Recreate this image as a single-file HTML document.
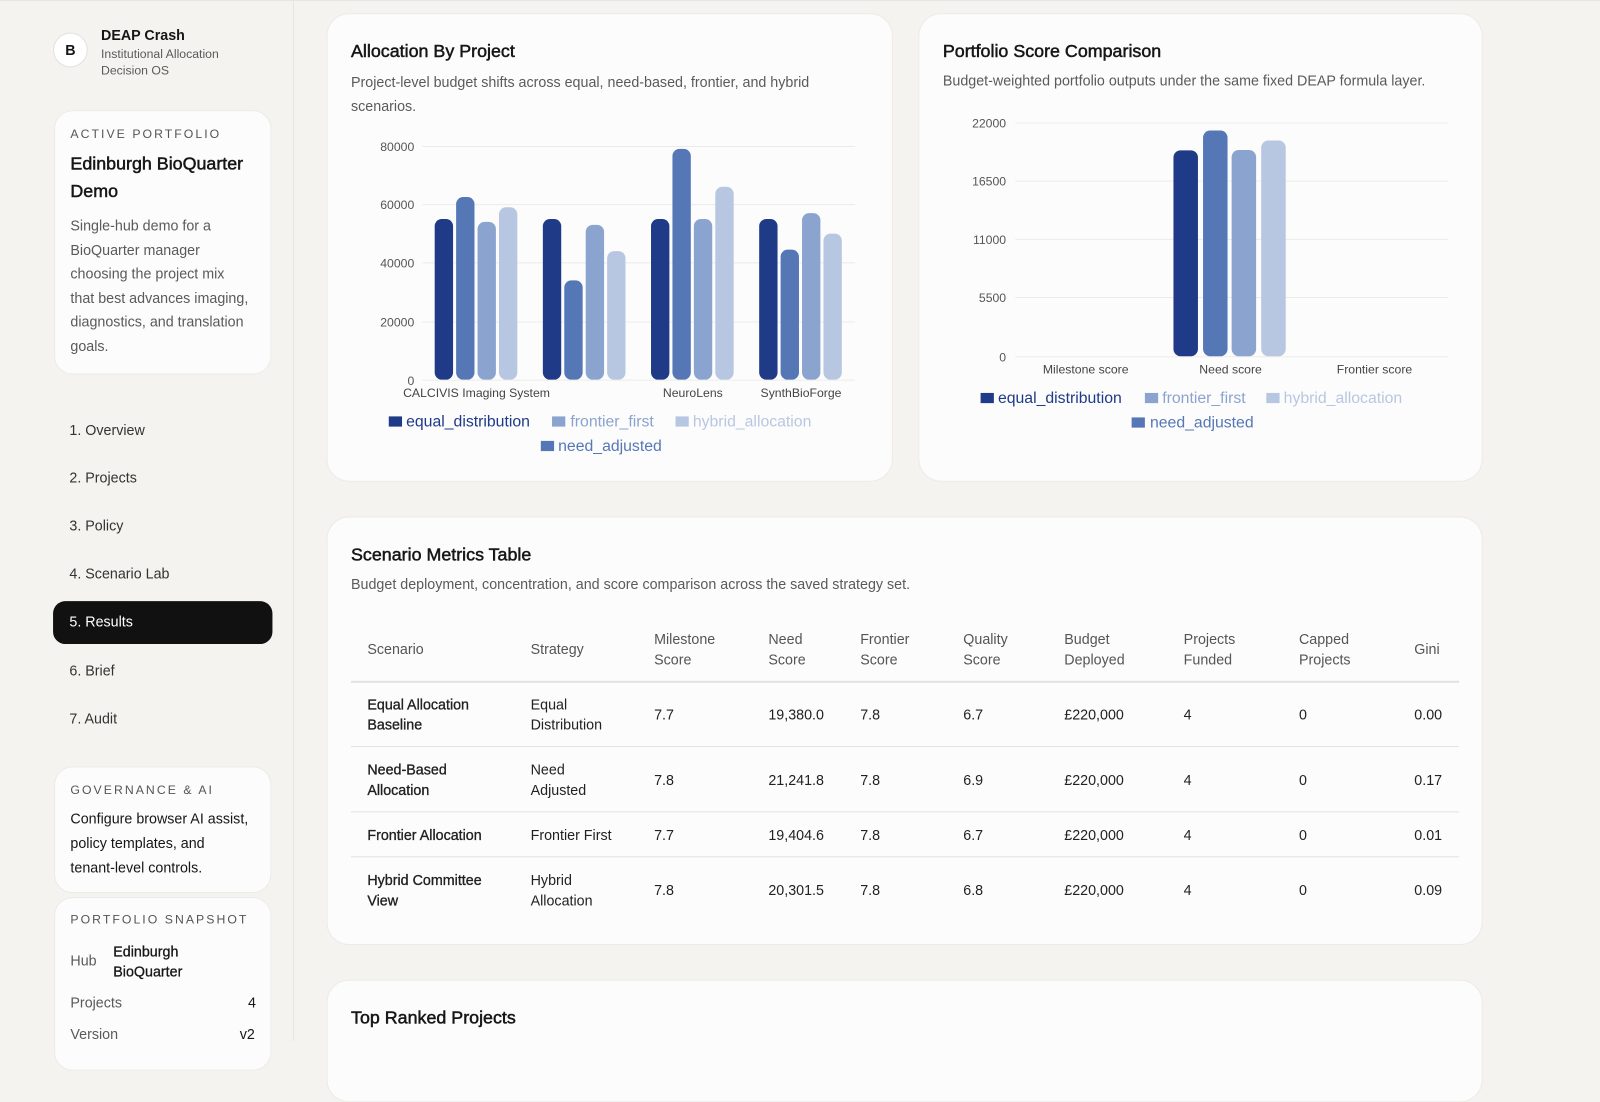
<!DOCTYPE html>
<html><head><meta charset="utf-8"><style>
*{box-sizing:border-box;margin:0;padding:0}
html,body{width:1600px;height:1041px;overflow:hidden;background:#f4f3ef;font-family:"Liberation Sans",sans-serif;color:#161616}
#wrap{position:absolute;left:0;top:0;width:1568px;height:1020px;transform:scale(1.0204,1.0206);transform-origin:0 0}
.a{position:absolute;white-space:nowrap}
.card{position:absolute;background:#fdfcfc;border:1px solid #ecebe7;border-radius:20px}
.lbl{font-size:12px;letter-spacing:2px;color:#555}
.g{color:#5a5a5a}
.t{-webkit-text-stroke:0.5px #161616}
.m{-webkit-text-stroke:0.3px #161616;color:#161616}
.nav{position:absolute;left:68px;font-size:14px;color:#333}
.th{position:absolute;font-size:14px;color:#555;line-height:20px}
.td{position:absolute;font-size:14px;line-height:20px;color:#222}
.hl{position:absolute;left:344px;width:1086px;height:1px;background:#e3e2de}
</style></head><body><div id="wrap">
<div class="a" style="left:0;top:0;width:1568px;height:1px;background:#e6e5e1"></div>
<div class="a" style="left:287px;top:0;width:1px;height:1020px;background:#e6e5e1"></div>

<!-- sidebar -->
<div class="a" style="left:52px;top:32px;width:34px;height:34px;border-radius:50%;background:#fff;border:1px solid #e2e1dd;text-align:center;line-height:32px;font-size:14px;font-weight:bold">B</div>
<div class="a" style="left:99px;top:26px;font-size:14px;font-weight:bold">DEAP Crash</div>
<div class="a g" style="left:99px;top:45px;font-size:12px;line-height:16px">Institutional Allocation<br>Decision OS</div>

<div class="card" style="left:53px;top:108px;width:213px;height:259px;border-radius:18px"></div>
<div class="a lbl" style="left:69px;top:124px">ACTIVE PORTFOLIO</div>
<div class="a t" style="left:69px;top:147px;font-size:17.5px;line-height:27px">Edinburgh BioQuarter<br>Demo</div>
<div class="a g" style="left:69px;top:210px;font-size:14px;line-height:23.6px">Single-hub demo for a<br>BioQuarter manager<br>choosing the project mix<br>that best advances imaging,<br>diagnostics, and translation<br>goals.</div>

<div class="nav" style="top:413px">1. Overview</div>
<div class="nav" style="top:460px">2. Projects</div>
<div class="nav" style="top:507px">3. Policy</div>
<div class="nav" style="top:554px">4. Scenario Lab</div>
<div class="a" style="left:52px;top:589px;width:215px;height:42px;background:#111;border-radius:12px"></div>
<div class="nav" style="top:601px;color:#fff">5. Results</div>
<div class="nav" style="top:649px">6. Brief</div>
<div class="nav" style="top:696px">7. Audit</div>

<div class="card" style="left:53px;top:751px;width:213px;height:124px;border-radius:18px"></div>
<div class="a lbl" style="left:69px;top:767px">GOVERNANCE &amp; AI</div>
<div class="a" style="left:69px;top:790px;font-size:14px;line-height:24px">Configure browser AI assist,<br>policy templates, and<br>tenant-level controls.</div>

<div class="card" style="left:53px;top:879px;width:213px;height:170px;border-radius:18px"></div>
<div class="a lbl" style="left:69px;top:894px">PORTFOLIO SNAPSHOT</div>
<div class="a g" style="left:69px;top:933px;font-size:14px">Hub</div>
<div class="a m" style="left:111px;top:922px;font-size:14px;line-height:20px">Edinburgh<br>BioQuarter</div>
<div class="a g" style="left:69px;top:974px;font-size:14px">Projects</div>
<div class="a" style="left:243px;top:974px;font-size:14px">4</div>
<div class="a g" style="left:69px;top:1005px;font-size:14px">Version</div>
<div class="a" style="left:235px;top:1005px;font-size:14px">v2</div>

<!-- cards -->
<div class="card" style="left:320px;top:13px;width:555px;height:459px;border-radius:22px"></div>
<div class="a t" style="left:344px;top:40px;font-size:17.5px">Allocation By Project</div>
<div class="a g" style="left:344px;top:69px;font-size:14px;line-height:23.5px">Project-level budget shifts across equal, need-based, frontier, and hybrid<br>scenarios.</div>

<div class="card" style="left:900px;top:13px;width:553px;height:459px;border-radius:22px"></div>
<div class="a t" style="left:924px;top:40px;font-size:17.5px">Portfolio Score Comparison</div>
<div class="a g" style="left:924px;top:71px;font-size:14px">Budget-weighted portfolio outputs under the same fixed DEAP formula layer.</div>

<svg class="a" style="left:0;top:0" width="1568" height="1020" font-family="Liberation Sans, sans-serif">
<g stroke="#ecebe8" stroke-width="1">
<line x1="414" x2="838" y1="143.5" y2="143.5"/><line x1="414" x2="838" y1="200.5" y2="200.5"/><line x1="414" x2="838" y1="257.5" y2="257.5"/><line x1="414" x2="838" y1="315.5" y2="315.5"/><line x1="414" x2="838" y1="372.5" y2="372.5"/>
<line x1="995" x2="1419" y1="120.5" y2="120.5"/><line x1="995" x2="1419" y1="177.5" y2="177.5"/><line x1="995" x2="1419" y1="234.5" y2="234.5"/><line x1="995" x2="1419" y1="291.5" y2="291.5"/><line x1="995" x2="1419" y1="349.5" y2="349.5"/>
</g>
<g font-size="12" fill="#555" text-anchor="end">
<text x="406" y="148">80000</text><text x="406" y="205">60000</text><text x="406" y="262">40000</text><text x="406" y="320">20000</text><text x="406" y="377">0</text>
<text x="986" y="125">22000</text><text x="986" y="182">16500</text><text x="986" y="239">11000</text><text x="986" y="296">5500</text><text x="986" y="354">0</text>
</g>
<g font-size="12" fill="#444" text-anchor="middle">
<text x="467" y="389">CALCIVIS Imaging System</text><text x="679" y="389">NeuroLens</text><text x="785" y="389">SynthBioForge</text>
<text x="1064" y="366">Milestone score</text><text x="1206" y="366">Need score</text><text x="1347" y="366">Frontier score</text>
</g>
<g>
<g fill="#1f3a87"><rect x="426" y="214.6" width="18" height="157.4" rx="7"/><rect x="532" y="214.6" width="18" height="157.4" rx="7"/><rect x="638" y="214.6" width="18" height="157.4" rx="7"/><rect x="744" y="214.6" width="18" height="157.4" rx="7"/></g>
<g fill="#5577b6"><rect x="447" y="193" width="18" height="179" rx="7"/><rect x="553" y="274.7" width="18" height="97.3" rx="7"/><rect x="659" y="145.9" width="18" height="226.1" rx="7"/><rect x="765" y="244.6" width="18" height="127.4" rx="7"/></g>
<g fill="#8aa4cf"><rect x="468" y="217.4" width="18" height="154.6" rx="7"/><rect x="574" y="220.3" width="18" height="151.7" rx="7"/><rect x="680" y="214.6" width="18" height="157.4" rx="7"/><rect x="786" y="208.8" width="18" height="163.2" rx="7"/></g>
<g fill="#b8c7e1"><rect x="489" y="203.1" width="18" height="168.9" rx="7"/><rect x="595" y="246" width="18" height="126" rx="7"/><rect x="701" y="183" width="18" height="189" rx="7"/><rect x="807" y="228.9" width="18" height="143.1" rx="7"/></g>
<rect x="1150" y="147.3" width="24" height="201.7" rx="7" fill="#1f3a87"/>
<rect x="1179" y="127.9" width="24" height="221.1" rx="7" fill="#5577b6"/>
<rect x="1207" y="147" width="24" height="202" rx="7" fill="#8aa4cf"/>
<rect x="1236" y="137.7" width="24" height="211.3" rx="7" fill="#b8c7e1"/>
</g>
<g font-size="15.5">
<rect x="381" y="408" width="13" height="10" fill="#1f3a87"/><text x="398" y="418" fill="#1f3a87">equal_distribution</text>
<rect x="541" y="408" width="13" height="10" fill="#8aa4cf"/><text x="559" y="418" fill="#8aa4cf">frontier_first</text>
<rect x="662" y="408" width="13" height="10" fill="#b8c7e1"/><text x="679" y="418" fill="#b8c7e1">hybrid_allocation</text>
<rect x="530" y="432" width="13" height="10" fill="#5577b6"/><text x="547" y="442" fill="#5577b6">need_adjusted</text>
<rect x="961" y="385" width="13" height="10" fill="#1f3a87"/><text x="978" y="395" fill="#1f3a87">equal_distribution</text>
<rect x="1122" y="385" width="13" height="10" fill="#8aa4cf"/><text x="1139" y="395" fill="#8aa4cf">frontier_first</text>
<rect x="1241" y="385" width="13" height="10" fill="#b8c7e1"/><text x="1258" y="395" fill="#b8c7e1">hybrid_allocation</text>
<rect x="1109" y="409" width="13" height="10" fill="#5577b6"/><text x="1127" y="419" fill="#5577b6">need_adjusted</text>
</g>
</svg>

<!-- table card -->
<div class="card" style="left:320px;top:506px;width:1133px;height:420px;border-radius:22px"></div>
<div class="a t" style="left:344px;top:533px;font-size:17.5px">Scenario Metrics Table</div>
<div class="a g" style="left:344px;top:564px;font-size:14px">Budget deployment, concentration, and score comparison across the saved strategy set.</div>

<div class="th" style="left:360px;top:626px">Scenario</div>
<div class="th" style="left:520px;top:626px">Strategy</div>
<div class="th" style="left:641px;top:616px">Milestone<br>Score</div>
<div class="th" style="left:753px;top:616px">Need<br>Score</div>
<div class="th" style="left:843px;top:616px">Frontier<br>Score</div>
<div class="th" style="left:944px;top:616px">Quality<br>Score</div>
<div class="th" style="left:1043px;top:616px">Budget<br>Deployed</div>
<div class="th" style="left:1160px;top:616px">Projects<br>Funded</div>
<div class="th" style="left:1273px;top:616px">Capped<br>Projects</div>
<div class="th" style="left:1386px;top:626px">Gini</div>
<div class="hl" style="top:667px;height:2px"></div>
<div class="hl" style="top:731px"></div>
<div class="hl" style="top:795px"></div>
<div class="hl" style="top:839px"></div>

<div class="td m" style="left:360px;top:680px">Equal Allocation<br>Baseline</div>
<div class="td g" style="left:520px;top:680px">Equal<br>Distribution</div>
<div class="td" style="left:641px;top:690px">7.7</div><div class="td" style="left:753px;top:690px">19,380.0</div><div class="td" style="left:843px;top:690px">7.8</div><div class="td" style="left:944px;top:690px">6.7</div><div class="td" style="left:1043px;top:690px">£220,000</div><div class="td" style="left:1160px;top:690px">4</div><div class="td" style="left:1273px;top:690px">0</div><div class="td" style="left:1386px;top:690px">0.00</div>

<div class="td m" style="left:360px;top:744px">Need-Based<br>Allocation</div>
<div class="td g" style="left:520px;top:744px">Need<br>Adjusted</div>
<div class="td" style="left:641px;top:754px">7.8</div><div class="td" style="left:753px;top:754px">21,241.8</div><div class="td" style="left:843px;top:754px">7.8</div><div class="td" style="left:944px;top:754px">6.9</div><div class="td" style="left:1043px;top:754px">£220,000</div><div class="td" style="left:1160px;top:754px">4</div><div class="td" style="left:1273px;top:754px">0</div><div class="td" style="left:1386px;top:754px">0.17</div>

<div class="td m" style="left:360px;top:808px">Frontier Allocation</div>
<div class="td g" style="left:520px;top:808px">Frontier First</div>
<div class="td" style="left:641px;top:808px">7.7</div><div class="td" style="left:753px;top:808px">19,404.6</div><div class="td" style="left:843px;top:808px">7.8</div><div class="td" style="left:944px;top:808px">6.7</div><div class="td" style="left:1043px;top:808px">£220,000</div><div class="td" style="left:1160px;top:808px">4</div><div class="td" style="left:1273px;top:808px">0</div><div class="td" style="left:1386px;top:808px">0.01</div>

<div class="td m" style="left:360px;top:852px">Hybrid Committee<br>View</div>
<div class="td g" style="left:520px;top:852px">Hybrid<br>Allocation</div>
<div class="td" style="left:641px;top:862px">7.8</div><div class="td" style="left:753px;top:862px">20,301.5</div><div class="td" style="left:843px;top:862px">7.8</div><div class="td" style="left:944px;top:862px">6.8</div><div class="td" style="left:1043px;top:862px">£220,000</div><div class="td" style="left:1160px;top:862px">4</div><div class="td" style="left:1273px;top:862px">0</div><div class="td" style="left:1386px;top:862px">0.09</div>

<div class="card" style="left:320px;top:960px;width:1133px;height:120px;border-radius:22px"></div>
<div class="a t" style="left:344px;top:987px;font-size:17.5px">Top Ranked Projects</div>
</div></body></html>
